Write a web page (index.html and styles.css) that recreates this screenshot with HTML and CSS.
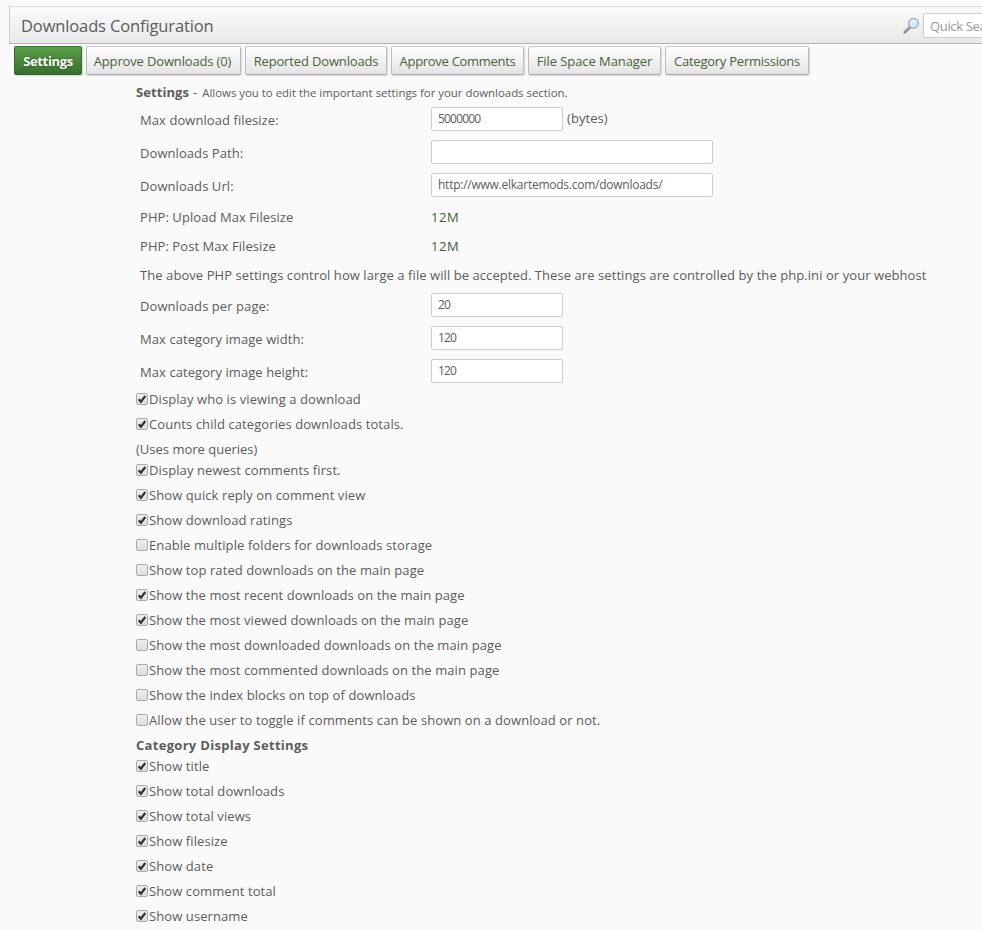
FILE: index.html
```
<!DOCTYPE html>
<html lang="en">
<head>
<meta charset="utf-8">
<title>Downloads Configuration</title>
<link rel="stylesheet" href="styles.css">
</head>
<body>
<header class="bar">
  <h1 class="title">Downloads Configuration</h1>
  <div class="search">
    <svg class="glass" width="17" height="17" viewBox="0 0 17 17">
      <path d="M1.800 15.200 6.600 10.400" stroke="#85878a" stroke-width="2.800" stroke-linecap="round"/>
      <path d="M2 14.600 6.400 10.200" stroke="#c3b6a4" stroke-width="1" stroke-linecap="round"/>
      <circle cx="10.500" cy="6.300" r="4.900" fill="#d5e6f6" stroke="#9badbf" stroke-width="1.300"/>
      <path d="M7.600 5.800a3 3 0 0 1 5.600-.700c-2-.300-3.500 1.600-5.600.700z" fill="#f4f9fd"/>
    </svg>
    <div class="quick">Quick Search</div>
  </div>
</header>
<nav class="tabs">
  <a class="tab active t1">Settings</a>
  <a class="tab t2">Approve Downloads (0)</a>
  <a class="tab t3">Reported Downloads</a>
  <a class="tab t4">Approve Comments</a>
  <a class="tab t5">File Space Manager</a>
  <a class="tab t6">Category Permissions</a>
</nav>
<main class="content">
  <p class="intro"><b>Settings</b><span class="dash">-</span><span class="small">Allows you to edit the important settings for your downloads section.</span></p>
  <div class="field"><label>Max download filesize:</label><span class="input">5000000</span><span class="unit">(bytes)</span></div>
  <div class="field"><label>Downloads Path:</label><span class="input wide"></span></div>
  <div class="field"><label>Downloads Url:</label><span class="input wide">http://www.elkartemods.com/downloads/</span></div>
  <div class="field info"><label>PHP: Upload Max Filesize</label><span class="value">12M</span></div>
  <div class="field info"><label>PHP: Post Max Filesize</label><span class="value">12M</span></div>
  <div class="field info">The above PHP settings control how large a file will be accepted. These are settings are controlled by the php.ini or your webhost</div>
  <div class="field"><label>Downloads per page:</label><span class="input">20</span></div>
  <div class="field"><label>Max category image width:</label><span class="input">120</span></div>
  <div class="field"><label>Max category image height:</label><span class="input">120</span></div>
  <div class="checks">
    <label class="check"><input type="checkbox" checked>Display who is viewing a download</label>
    <label class="check"><input type="checkbox" checked>Counts child categories downloads totals.</label>
    <div class="line">(Uses more queries)</div>
    <label class="check"><input type="checkbox" checked>Display newest comments first.</label>
    <label class="check"><input type="checkbox" checked>Show quick reply on comment view</label>
    <label class="check"><input type="checkbox" checked>Show download ratings</label>
    <label class="check"><input type="checkbox">Enable multiple folders for downloads storage</label>
    <label class="check"><input type="checkbox">Show top rated downloads on the main page</label>
    <label class="check"><input type="checkbox" checked>Show the most recent downloads on the main page</label>
    <label class="check"><input type="checkbox" checked>Show the most viewed downloads on the main page</label>
    <label class="check"><input type="checkbox">Show the most downloaded downloads on the main page</label>
    <label class="check"><input type="checkbox">Show the most commented downloads on the main page</label>
    <label class="check"><input type="checkbox">Show the index blocks on top of downloads</label>
    <label class="check"><input type="checkbox">Allow the user to toggle if comments can be shown on a download or not.</label>
    <div class="line heading">Category Display Settings</div>
    <label class="check"><input type="checkbox" checked>Show title</label>
    <label class="check"><input type="checkbox" checked>Show total downloads</label>
    <label class="check"><input type="checkbox" checked>Show total views</label>
    <label class="check"><input type="checkbox" checked>Show filesize</label>
    <label class="check"><input type="checkbox" checked>Show date</label>
    <label class="check"><input type="checkbox" checked>Show comment total</label>
    <label class="check"><input type="checkbox" checked>Show username</label>
  </div>
</main>
</body>
</html>
```
FILE: styles.css
```
* { box-sizing: border-box; }
html { overflow: hidden; }
body {
  margin: 0;
  height: 930px;
  overflow: hidden;
  background: #fafafa;
  color: #5c5c5c;
  font: 13px/20px "Open Sans", "Noto Sans", sans-serif;
  letter-spacing: .07px;
  white-space: nowrap;
}
.bar {
  display: flex;
  justify-content: space-between;
  align-items: center;
  height: 38px;
  margin: 6px 0 0 9px;
  padding-left: 11px;
  border: 1px solid #ccc;
  border-top-color: #ddd;
  border-bottom-color: #b4b4b4;
  border-right: 0;
  background: linear-gradient(#fafafa, #e8e8e8);
}
.title { margin: 0; padding-top: 2px; font-size: 16.5px; font-weight: 400; line-height: 24px; letter-spacing: -.13px; }
.search { display: flex; align-items: center; gap: 3px; width: 79px; overflow: hidden; }
.glass { flex: none; }
.quick {
  flex: none;
  width: 120px;
  height: 25px;
  padding: 0 6px;
  border: 1px solid #ccc;
  border-radius: 2px;
  background: #fff;
  color: #999;
  line-height: 25px;
  letter-spacing: -.35px;
}
.tabs { display: flex; gap: 4px; padding: 2px 0 0 14px; height: 31px; }
.tab {
  height: 29px;
  border: 1px solid #bbb;
  border-top-color: #ccc;
  border-bottom-color: #aaa;
  border-radius: 2px;
  background: linear-gradient(#fff, #e4e4e4);
  box-shadow: 1px 1px 2px rgba(0, 0, 0, .14);
  color: #4b6043;
  text-align: center;
  line-height: 29px;
  letter-spacing: -.15px;
}
.active {
  border-color: #3d7a36 #35682c #2f6128;
  background: linear-gradient(#5a9f48, #38702d);
  color: #fff;
  font-weight: 700;
  letter-spacing: -.35px;
  text-shadow: 0 0 2px #234b1c;
}
.t1 { width: 68px; }
.t2 { width: 155px; padding-right: 2px; }
.t3 { width: 142px; }
.t4 { width: 133px; letter-spacing: -.3px; }
.t5 { width: 133px; letter-spacing: -.08px; }
.t6 { width: 144px; letter-spacing: -.25px; }
.content { margin-left: 136px; }
.intro { margin: 0; height: 28px; padding-top: 7px; }
.dash { margin: 0 5px 0 4px; }
.small { font-size: 11.4px; letter-spacing: 0; }
.field { display: flex; align-items: center; height: 33px; padding-left: 4px; }
.field label { width: 291px; padding-top: 1px; }
.input {
  width: 132px;
  height: 24px;
  margin-bottom: 2px;
  padding-left: 6px;
  border: 1px solid #ccc;
  border-radius: 2px;
  background: #fff;
  font-size: 12px;
  line-height: 22px;
  letter-spacing: -.8px;
}
.wide { width: 282px; letter-spacing: -.25px; }
.unit { margin-left: 4px; padding-bottom: 3px; }
.info { height: 29px; }
.value { color: #3f5e33; letter-spacing: .6px; }
.checks { margin-top: -2px; }
.check { display: flex; align-items: center; height: 25px; letter-spacing: .09px; }
.check input {
  appearance: none;
  width: 12px;
  height: 12px;
  margin: 0 1px 0 0;
  border: 1px solid #aaa;
  border-radius: 2px;
  background: linear-gradient(#eee, #ddd);
}
.check input:checked {
  background: url("data:image/svg+xml,%3Csvg xmlns='http://www.w3.org/2000/svg' viewBox='0 0 10 10'%3E%3Cpath d='M1.700 5.300 3.900 7.700 8.300 2' fill='none' stroke='%23333' stroke-width='2.200'/%3E%3C/svg%3E"), linear-gradient(#eee, #ddd);
}
.line { height: 21px; padding-top: 3px; letter-spacing: 0; }
.heading { font-weight: 700; letter-spacing: .3px; }
```
